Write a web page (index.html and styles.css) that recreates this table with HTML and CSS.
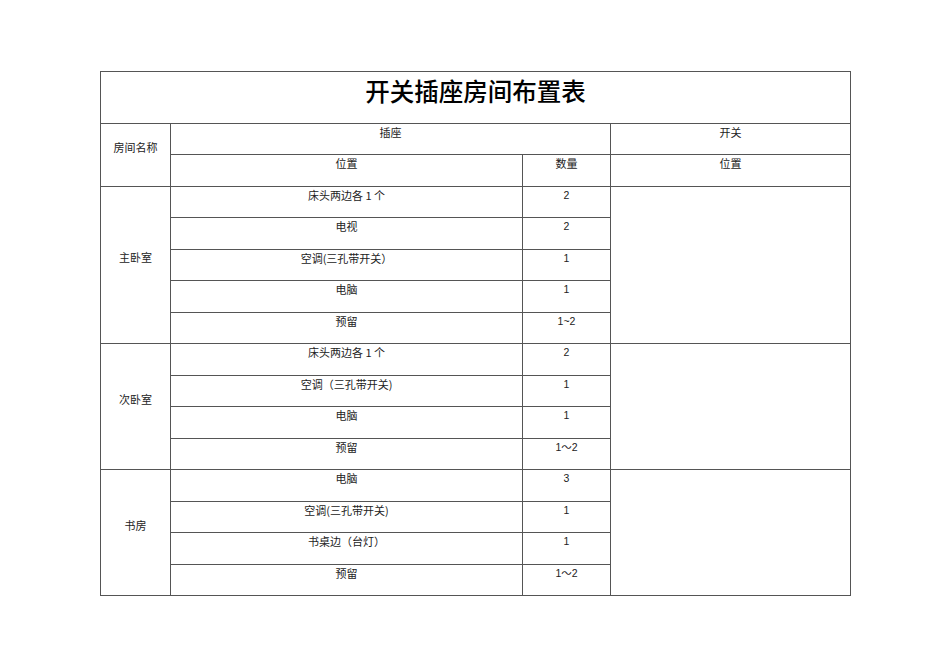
FILE: index.html
```html
<!DOCTYPE html>
<html lang="zh">
<head>
<meta charset="utf-8">
<title>开关插座房间布置表</title>
<link rel="stylesheet" href="styles.css">
</head>
<body>
<table class="sheet">
  <colgroup>
    <col class="c-room">
    <col class="c-pos">
    <col class="c-qty">
    <col class="c-sw">
  </colgroup>
  <tr class="r-title"><td colspan="4" class="title">开关插座房间布置表</td></tr>
  <tr><td rowspan="2" class="room">房间名称</td><td colspan="2">插座</td><td>开关</td></tr>
  <tr><td>位置</td><td>数量</td><td>位置</td></tr>

  <tr><td rowspan="5" class="room">主卧室</td><td>床头两边各 1 个</td><td class="num">2</td><td rowspan="5"></td></tr>
  <tr><td>电视</td><td class="num">2</td></tr>
  <tr><td>空调(三孔带开关）</td><td class="num">1</td></tr>
  <tr><td>电脑</td><td class="num">1</td></tr>
  <tr><td>预留</td><td class="num">1~2</td></tr>

  <tr><td rowspan="4" class="room">次卧室</td><td>床头两边各 1 个</td><td class="num">2</td><td rowspan="4"></td></tr>
  <tr><td>空调（三孔带开关)</td><td class="num">1</td></tr>
  <tr><td>电脑</td><td class="num">1</td></tr>
  <tr><td>预留</td><td class="num">1～2</td></tr>

  <tr><td rowspan="4" class="room">书房</td><td>电脑</td><td class="num">3</td><td rowspan="4"></td></tr>
  <tr><td>空调(三孔带开关)</td><td class="num">1</td></tr>
  <tr><td>书桌边（台灯）</td><td class="num">1</td></tr>
  <tr><td>预留</td><td class="num">1～2</td></tr>
</table>
</body>
</html>
```

FILE: styles.css
```css
html, body {
  margin: 0;
  padding: 0;
  background: #ffffff;
}

body {
  padding: 71px 0 0 100px;
  font-family: "Noto Sans CJK SC", "Noto Sans", sans-serif;
  color: #222;
}

.sheet {
  border-collapse: collapse;
  table-layout: fixed;
  width: 750px;
  border: 1px solid #8a8a8a;
}

.c-room { width: 70px; }
.c-pos { width: 352px; }
.c-qty { width: 88px; }
.c-sw { width: 240px; }

.sheet tr {
  height: 31.5px;
}

.sheet td {
  border: 1px solid #555;
  padding: 1px 0 0 0;
  font-size: 11px;
  line-height: 15px;
  text-align: center;
  vertical-align: top;
  white-space: nowrap;
  overflow: hidden;
}

.sheet tr.r-title {
  height: 51.5px;
}

.sheet td.title {
  font-size: 24.5px;
  line-height: 30px;
  font-weight: 500;
  color: #000;
  padding-top: 4px;
  padding-left: 0;
}

.sheet td.room {
  vertical-align: middle;
  padding: 0 0 14px 0;
}

.sheet td.num {
  font-family: "Liberation Sans", "Noto Sans CJK SC", sans-serif;
  font-size: 10.5px;
}
```
